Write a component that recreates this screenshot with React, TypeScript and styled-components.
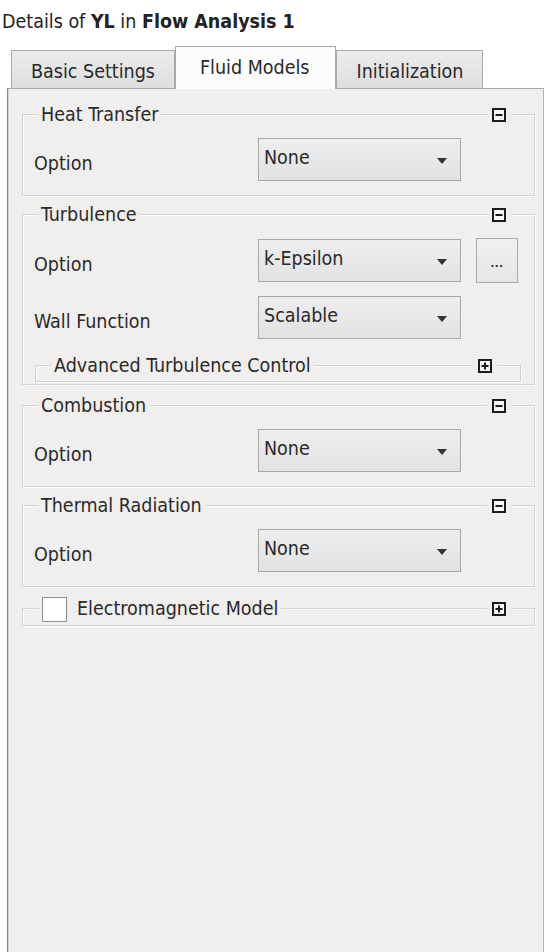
import React from "react";
import styled, { createGlobalStyle, css } from "styled-components";

const GlobalStyle = createGlobalStyle`
  html, body {
    margin: 0;
    padding: 0;
    background: #ffffff;
  }
  body {
    font-family: "DejaVu Sans Condensed", "DejaVu Sans", sans-serif;
    font-stretch: condensed;
    font-size: 19.5px;
    color: #2a2a2a;
  }
  * { box-sizing: border-box; }
`;

const PANEL_BG = "#f0efed";

const Page = styled.div`
  display: flex;
  flex-direction: column;
  min-height: 100vh;
`;

const Title = styled.div`
  padding: 11px 0 0 2px;
  line-height: 22px;
  height: 33px;
  color: #222;
  white-space: nowrap;
  b { font-weight: bold; }
`;

const TabBar = styled.div`
  display: flex;
  align-items: flex-end;
  margin-top: 13px;
  padding-left: 11px;
`;

const Tab = styled.div<{ $active?: boolean }>`
  display: flex;
  align-items: center;
  white-space: nowrap;
  border: 1px solid #a9a9a9;
  border-bottom: none;
  height: 38px;
  padding: 3px 19px 0;
  background: linear-gradient(#ececec, #dedede);
  color: #2a2a2a;
  ${(p) =>
    p.$active &&
    css`
      position: relative;
      z-index: 1;
      height: 43px;
      margin-bottom: -1px;
      padding: 0 26px 1px 24px;
      background: #fcfcfc;
    `}
`;

const Panel = styled.div`
  flex: 1;
  margin: 0 3px 0 7px;
  border-top: 1px solid #a9a9a9;
  border-left: 1px solid #858585;
  border-right: 1px solid #b4b4b4;
  box-shadow: inset 1px 0 0 #cfcfcf;
  background: ${PANEL_BG};
  padding: 25px 8px 20px 14px;
`;

const Group = styled.div<{ $mt?: number; $pb?: number; $inset?: boolean }>`
  border: 1px solid #d4d2ce;
  box-shadow: inset 1px 1px 0 #fbfbfa, 1px 1px 0 #fbfbfa;
  margin-top: ${(p) => p.$mt ?? 0}px;
  padding-bottom: ${(p) => p.$pb ?? 14}px;
  ${(p) =>
    p.$inset &&
    css`
      margin-left: 12px;
      margin-right: 13px;
    `}
`;

const GroupHeader = styled.div<{ $tall?: boolean }>`
  display: flex;
  align-items: center;
  justify-content: space-between;
  height: ${(p) => (p.$tall ? 26 : 20)}px;
  margin-top: ${(p) => (p.$tall ? -13 : -10)}px;
  padding-left: ${(p) => (p.$tall ? 16 : 15)}px;
  padding-right: 23px;
`;

const Legend = styled.div`
  display: flex;
  align-items: center;
  gap: 10px;
  background: ${PANEL_BG};
  padding: 0 3px;
  line-height: 20px;
  white-space: nowrap;
`;

const ToggleWrap = styled.div`
  display: flex;
  align-items: center;
  background: ${PANEL_BG};
  padding: 0 5px;
`;

const Row = styled.div`
  display: grid;
  grid-template-columns: 209px 203px auto;
  column-gap: 15px;
  align-items: center;
  margin-top: 13px;
  padding-left: 11px;
`;

const Label = styled.div`
  padding-top: 8px;
  white-space: nowrap;
`;

const SelectBox = styled.div`
  display: flex;
  align-items: center;
  justify-content: space-between;
  height: 43px;
  border: 1px solid #a8a8a8;
  background: linear-gradient(#eeeeee, #e2e2e2);
  padding: 0 13px 4px 5px;
  color: #2a2a2a;
`;

const Arrow = styled.svg`
  margin-top: 7px;
`;

const DotsButton = styled.div`
  display: flex;
  align-items: flex-end;
  justify-content: center;
  width: 42px;
  height: 45px;
  border: 1px solid #a8a8a8;
  background: linear-gradient(#f0f0f0, #e6e6e6);
  padding-bottom: 13px;
  font-size: 11px;
  font-weight: bold;
  line-height: 11px;
  letter-spacing: 0.5px;
  color: #222;
`;

const CheckBox = styled.div`
  width: 25px;
  height: 25px;
  border: 1px solid #8f8f8f;
  background: #ffffff;
`;

const SubSpacer = styled.div`
  height: 26px;
`;

const Toggle: React.FC<{ plus?: boolean }> = ({ plus }) => (
  <ToggleWrap>
    <svg width="14" height="14" viewBox="0 0 14 14">
      <rect x="1" y="1" width="12" height="12" fill="#f6f6f6" stroke="#1c1c1c" strokeWidth="2" />
      <line x1="3.5" y1="7" x2="10.5" y2="7" stroke="#1c1c1c" strokeWidth="2" />
      {plus && <line x1="7" y1="3.5" x2="7" y2="10.5" stroke="#1c1c1c" strokeWidth="2" />}
    </svg>
  </ToggleWrap>
);

const Select: React.FC<{ value: string }> = ({ value }) => (
  <SelectBox>
    <span>{value}</span>
    <Arrow width="10" height="6" viewBox="0 0 10 6">
      <polygon points="0,0 10,0 5,6" fill="#333" />
    </Arrow>
  </SelectBox>
);

const OptionRow: React.FC<{ label: string; value: string; more?: boolean }> = ({ label, value, more }) => (
  <Row>
    <Label>{label}</Label>
    <Select value={value} />
    {more && <DotsButton>...</DotsButton>}
  </Row>
);

export default function App() {
  return (
    <>
      <GlobalStyle />
      <Page>
        <Title>
          Details of <b>YL</b> in <b>Flow Analysis 1</b>
        </Title>
        <TabBar>
          <Tab>Basic Settings</Tab>
          <Tab $active>Fluid Models</Tab>
          <Tab>Initialization</Tab>
        </TabBar>
        <Panel>
          <Group>
            <GroupHeader>
              <Legend>Heat Transfer</Legend>
              <Toggle />
            </GroupHeader>
            <OptionRow label="Option" value="None" />
          </Group>

          <Group $mt={18} $pb={2}>
            <GroupHeader>
              <Legend>Turbulence</Legend>
              <Toggle />
            </GroupHeader>
            <OptionRow label="Option" value="k-Epsilon" more />
            <OptionRow label="Wall Function" value="Scalable" />
            <SubSpacer />
            <Group $inset $pb={5}>
              <GroupHeader>
                <Legend>Advanced Turbulence Control</Legend>
                <Toggle plus />
              </GroupHeader>
            </Group>
          </Group>

          <Group $mt={20}>
            <GroupHeader>
              <Legend>Combustion</Legend>
              <Toggle />
            </GroupHeader>
            <OptionRow label="Option" value="None" />
          </Group>

          <Group $mt={18}>
            <GroupHeader>
              <Legend>Thermal Radiation</Legend>
              <Toggle />
            </GroupHeader>
            <OptionRow label="Option" value="None" />
          </Group>

          <Group $mt={21} $pb={3}>
            <GroupHeader $tall>
              <Legend>
                <CheckBox />
                Electromagnetic Model
              </Legend>
              <Toggle plus />
            </GroupHeader>
          </Group>
        </Panel>
      </Page>
    </>
  );
}
